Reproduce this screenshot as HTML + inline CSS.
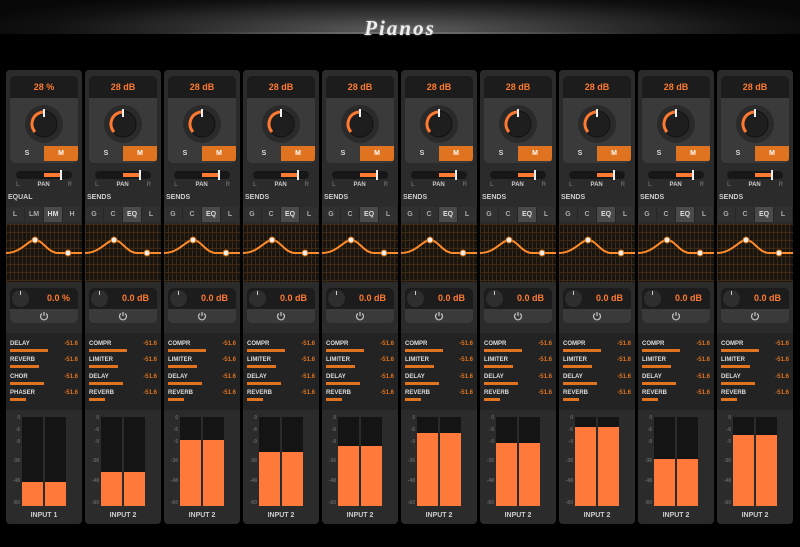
<!DOCTYPE html>
<html><head><style>
*{margin:0;padding:0;box-sizing:border-box}
body{width:800px;height:547px;background:#000;position:relative;overflow:hidden;font-family:"Liberation Sans",sans-serif;font-weight:bold}
.hdr{position:absolute;left:0;top:0;width:800px;height:34px;background:radial-gradient(ellipse 440px 40px at 400px 30px,#5c5c5c 0%,#303030 45%,#111 80%,#080808 100%)}
.hdr:after{content:"";position:absolute;left:150px;right:150px;bottom:0;height:2px;background:radial-gradient(ellipse at center,#888 0%,transparent 70%)}
.title{position:absolute;left:0;width:800px;top:16px;text-align:center;font-family:"Liberation Serif",serif;font-style:italic;font-size:21px;color:#eee;letter-spacing:2px;text-shadow:0 0 2px #999}
.s{position:absolute;top:70px;width:76px;height:454px;background:#2b2b2b;border-radius:4px;overflow:hidden}
.disp{position:absolute;left:4px;top:6px;width:68px;height:22px;background:#1c1c1c;border-radius:5px 5px 0 0;color:#ff7a30;font-size:9px;text-align:center;line-height:22px}
.kp{position:absolute;left:4px;top:28px;width:68px;height:65px;background:#3a3a3a;border-radius:0 0 5px 5px;overflow:hidden}
.kp svg{position:absolute;left:13px;top:5px}
.sm{position:absolute;left:0;top:48px;width:68px;height:15px;display:flex;font-size:7px;color:#ddd;line-height:15px;text-align:center}
.sm span{flex:1}.sm .m{background:#e0731f;color:#fff}
.pan{position:absolute;left:10px;top:101px;width:56px;height:8px;background:#171717;border-radius:4px}
.pan i{position:absolute;left:28px;top:2px;width:16px;height:4px;background:#ff7a30}
.pan b{position:absolute;left:44px;top:-1px;width:2px;height:10px;background:#eee}
.pl{position:absolute;top:112px;left:10px;width:56px;font-size:6px;color:#666;display:flex;justify-content:space-between}
.pl em{font-style:normal;color:#ccc}
.sec{position:absolute;left:2px;top:124px;font-size:7px;color:#ccc}
.tabs{position:absolute;left:0;top:137px;width:76px;height:15px;display:flex;font-size:7px;color:#aaa;line-height:15px;text-align:center;background:#303030}
.tabs span{flex:1;border-right:1px solid #262626}.tabs .a{background:#4a4a4a;color:#ddd}
.g{position:absolute;left:0;top:154px;width:76px;height:58px;background-color:#17130f;background-image:linear-gradient(90deg,#3e2a14 1px,transparent 1px),linear-gradient(#3e2a14 1px,transparent 1px);background-size:4px 8px}
.g svg{position:absolute;left:0;top:0}
.p2{position:absolute;left:4px;top:218px;width:68px;height:35px;background:#3a3a3a;border-radius:5px}
.p2 .d{position:absolute;left:0;top:0;width:68px;height:21px;background:#1c1c1c;border-radius:5px 5px 0 0;color:#ff7a30;font-size:9px;line-height:21px;text-align:right;padding-right:8px}
.p2 .k{position:absolute;left:2px;top:2px;width:17px;height:17px;border-radius:50%;background:#2e2e2e}
.p2 .k:after{content:"";position:absolute;left:8px;top:1px;width:1px;height:4px;background:#ccc}
.p2 svg{position:absolute;left:29px;top:23px}
.snd{position:absolute;left:0;top:263px;width:76px;height:77px;background:#232323}
.r{position:absolute;left:4px;width:68px;font-size:6px;color:#ddd}
.r span{position:absolute;right:0;color:#e0731f}
.r i{position:absolute;left:0;top:8px;height:3px;background:#e0731f}
.mt{position:absolute;left:0;top:344px;width:76px;height:96px}
.sc{position:absolute;left:2px;width:12px;text-align:right;font-size:5px;color:#666}
.ln{position:absolute;top:3px;width:21px;height:89px;background:#141414}
.ln i{position:absolute;left:0;bottom:0;width:21px;background:#ff7a3a}
.inp{position:absolute;left:0;top:442px;width:76px;text-align:center;font-size:7px;color:#ccc}
</style></head><body>
<div class="hdr"></div>
<div class="title">Pianos</div>

<div class="s" style="left:6px"><div class="disp">28 %</div><div class="kp"><svg width="42" height="42" viewBox="0 0 42 42"><circle cx="21" cy="21" r="19" fill="#2a2a2a"/><circle cx="21" cy="21" r="13" fill="#1e1e1e" stroke="#111"/><path d="M12 29 A12 12 0 0 1 21 9" fill="none" stroke="#ff7a30" stroke-width="3"/><rect x="20" y="6" width="2" height="8" fill="#eee"/></svg><div class="sm"><span>S</span><span class="m">M</span></div></div><div class="pan"><i></i><b></b></div><div class="pl"><span>L</span><em>PAN</em><span>R</span></div><div class="sec">EQUAL</div><div class="tabs"><span>L</span><span>LM</span><span class="a">HM</span><span>H</span></div><div class="g"><svg width="76" height="58"><path d="M0 29 C15 29 22 16 29 16 C37 16 42 29 52 29 L76 29" fill="none" stroke="#ff8a2a" stroke-width="2"/><circle cx="29" cy="16" r="3" fill="#eee" stroke="#c60"/><circle cx="62" cy="29" r="3" fill="#eee" stroke="#c60"/></svg></div><div class="p2"><div class="d">0.0 %</div><div class="k"></div><svg width="10" height="10" viewBox="0 0 10 10"><path d="M3 2.5A3.5 3.5 0 1 0 7 2.5M5 1V5" fill="none" stroke="#bbb" stroke-width="1.3"/></svg></div><div class="snd"><div class="r" style="top:8px">DELAY<span>-51.6</span><i style="width:38px"></i></div><div class="r" style="top:24px">REVERB<span>-51.6</span><i style="width:29px"></i></div><div class="r" style="top:41px">CHOR<span>-51.6</span><i style="width:34px"></i></div><div class="r" style="top:57px">PHASER<span>-51.6</span><i style="width:16px"></i></div></div><div class="mt"><div class="sc" style="top:1px">0</div><div class="sc" style="top:13px">-6</div><div class="sc" style="top:25px">-9</div><div class="sc" style="top:44px">-36</div><div class="sc" style="top:64px">-48</div><div class="sc" style="top:86px">-60</div><div class="ln" style="left:16px"><i style="height:24px"></i></div><div class="ln" style="left:39px"><i style="height:24px"></i></div></div><div class="inp">INPUT 1</div></div>

<div class="s" style="left:85px"><div class="disp">28 dB</div><div class="kp"><svg width="42" height="42" viewBox="0 0 42 42"><circle cx="21" cy="21" r="19" fill="#2a2a2a"/><circle cx="21" cy="21" r="13" fill="#1e1e1e" stroke="#111"/><path d="M12 29 A12 12 0 0 1 21 9" fill="none" stroke="#ff7a30" stroke-width="3"/><rect x="20" y="6" width="2" height="8" fill="#eee"/></svg><div class="sm"><span>S</span><span class="m">M</span></div></div><div class="pan"><i></i><b></b></div><div class="pl"><span>L</span><em>PAN</em><span>R</span></div><div class="sec">SENDS</div><div class="tabs"><span>G</span><span>C</span><span class="a">EQ</span><span>L</span></div><div class="g"><svg width="76" height="58"><path d="M0 29 C15 29 22 16 29 16 C37 16 42 29 52 29 L76 29" fill="none" stroke="#ff8a2a" stroke-width="2"/><circle cx="29" cy="16" r="3" fill="#eee" stroke="#c60"/><circle cx="62" cy="29" r="3" fill="#eee" stroke="#c60"/></svg></div><div class="p2"><div class="d">0.0 dB</div><div class="k"></div><svg width="10" height="10" viewBox="0 0 10 10"><path d="M3 2.5A3.5 3.5 0 1 0 7 2.5M5 1V5" fill="none" stroke="#bbb" stroke-width="1.3"/></svg></div><div class="snd"><div class="r" style="top:8px">COMPR<span>-51.6</span><i style="width:38px"></i></div><div class="r" style="top:24px">LIMITER<span>-51.6</span><i style="width:29px"></i></div><div class="r" style="top:41px">DELAY<span>-51.6</span><i style="width:34px"></i></div><div class="r" style="top:57px">REVERB<span>-51.6</span><i style="width:16px"></i></div></div><div class="mt"><div class="sc" style="top:1px">0</div><div class="sc" style="top:13px">-6</div><div class="sc" style="top:25px">-9</div><div class="sc" style="top:44px">-36</div><div class="sc" style="top:64px">-48</div><div class="sc" style="top:86px">-60</div><div class="ln" style="left:16px"><i style="height:34px"></i></div><div class="ln" style="left:39px"><i style="height:34px"></i></div></div><div class="inp">INPUT 2</div></div>

<div class="s" style="left:164px"><div class="disp">28 dB</div><div class="kp"><svg width="42" height="42" viewBox="0 0 42 42"><circle cx="21" cy="21" r="19" fill="#2a2a2a"/><circle cx="21" cy="21" r="13" fill="#1e1e1e" stroke="#111"/><path d="M12 29 A12 12 0 0 1 21 9" fill="none" stroke="#ff7a30" stroke-width="3"/><rect x="20" y="6" width="2" height="8" fill="#eee"/></svg><div class="sm"><span>S</span><span class="m">M</span></div></div><div class="pan"><i></i><b></b></div><div class="pl"><span>L</span><em>PAN</em><span>R</span></div><div class="sec">SENDS</div><div class="tabs"><span>G</span><span>C</span><span class="a">EQ</span><span>L</span></div><div class="g"><svg width="76" height="58"><path d="M0 29 C15 29 22 16 29 16 C37 16 42 29 52 29 L76 29" fill="none" stroke="#ff8a2a" stroke-width="2"/><circle cx="29" cy="16" r="3" fill="#eee" stroke="#c60"/><circle cx="62" cy="29" r="3" fill="#eee" stroke="#c60"/></svg></div><div class="p2"><div class="d">0.0 dB</div><div class="k"></div><svg width="10" height="10" viewBox="0 0 10 10"><path d="M3 2.5A3.5 3.5 0 1 0 7 2.5M5 1V5" fill="none" stroke="#bbb" stroke-width="1.3"/></svg></div><div class="snd"><div class="r" style="top:8px">COMPR<span>-51.6</span><i style="width:38px"></i></div><div class="r" style="top:24px">LIMITER<span>-51.6</span><i style="width:29px"></i></div><div class="r" style="top:41px">DELAY<span>-51.6</span><i style="width:34px"></i></div><div class="r" style="top:57px">REVERB<span>-51.6</span><i style="width:16px"></i></div></div><div class="mt"><div class="sc" style="top:1px">0</div><div class="sc" style="top:13px">-6</div><div class="sc" style="top:25px">-9</div><div class="sc" style="top:44px">-36</div><div class="sc" style="top:64px">-48</div><div class="sc" style="top:86px">-60</div><div class="ln" style="left:16px"><i style="height:66px"></i></div><div class="ln" style="left:39px"><i style="height:66px"></i></div></div><div class="inp">INPUT 2</div></div>

<div class="s" style="left:243px"><div class="disp">28 dB</div><div class="kp"><svg width="42" height="42" viewBox="0 0 42 42"><circle cx="21" cy="21" r="19" fill="#2a2a2a"/><circle cx="21" cy="21" r="13" fill="#1e1e1e" stroke="#111"/><path d="M12 29 A12 12 0 0 1 21 9" fill="none" stroke="#ff7a30" stroke-width="3"/><rect x="20" y="6" width="2" height="8" fill="#eee"/></svg><div class="sm"><span>S</span><span class="m">M</span></div></div><div class="pan"><i></i><b></b></div><div class="pl"><span>L</span><em>PAN</em><span>R</span></div><div class="sec">SENDS</div><div class="tabs"><span>G</span><span>C</span><span class="a">EQ</span><span>L</span></div><div class="g"><svg width="76" height="58"><path d="M0 29 C15 29 22 16 29 16 C37 16 42 29 52 29 L76 29" fill="none" stroke="#ff8a2a" stroke-width="2"/><circle cx="29" cy="16" r="3" fill="#eee" stroke="#c60"/><circle cx="62" cy="29" r="3" fill="#eee" stroke="#c60"/></svg></div><div class="p2"><div class="d">0.0 dB</div><div class="k"></div><svg width="10" height="10" viewBox="0 0 10 10"><path d="M3 2.5A3.5 3.5 0 1 0 7 2.5M5 1V5" fill="none" stroke="#bbb" stroke-width="1.3"/></svg></div><div class="snd"><div class="r" style="top:8px">COMPR<span>-51.6</span><i style="width:38px"></i></div><div class="r" style="top:24px">LIMITER<span>-51.6</span><i style="width:29px"></i></div><div class="r" style="top:41px">DELAY<span>-51.6</span><i style="width:34px"></i></div><div class="r" style="top:57px">REVERB<span>-51.6</span><i style="width:16px"></i></div></div><div class="mt"><div class="sc" style="top:1px">0</div><div class="sc" style="top:13px">-6</div><div class="sc" style="top:25px">-9</div><div class="sc" style="top:44px">-36</div><div class="sc" style="top:64px">-48</div><div class="sc" style="top:86px">-60</div><div class="ln" style="left:16px"><i style="height:54px"></i></div><div class="ln" style="left:39px"><i style="height:54px"></i></div></div><div class="inp">INPUT 2</div></div>

<div class="s" style="left:322px"><div class="disp">28 dB</div><div class="kp"><svg width="42" height="42" viewBox="0 0 42 42"><circle cx="21" cy="21" r="19" fill="#2a2a2a"/><circle cx="21" cy="21" r="13" fill="#1e1e1e" stroke="#111"/><path d="M12 29 A12 12 0 0 1 21 9" fill="none" stroke="#ff7a30" stroke-width="3"/><rect x="20" y="6" width="2" height="8" fill="#eee"/></svg><div class="sm"><span>S</span><span class="m">M</span></div></div><div class="pan"><i></i><b></b></div><div class="pl"><span>L</span><em>PAN</em><span>R</span></div><div class="sec">SENDS</div><div class="tabs"><span>G</span><span>C</span><span class="a">EQ</span><span>L</span></div><div class="g"><svg width="76" height="58"><path d="M0 29 C15 29 22 16 29 16 C37 16 42 29 52 29 L76 29" fill="none" stroke="#ff8a2a" stroke-width="2"/><circle cx="29" cy="16" r="3" fill="#eee" stroke="#c60"/><circle cx="62" cy="29" r="3" fill="#eee" stroke="#c60"/></svg></div><div class="p2"><div class="d">0.0 dB</div><div class="k"></div><svg width="10" height="10" viewBox="0 0 10 10"><path d="M3 2.5A3.5 3.5 0 1 0 7 2.5M5 1V5" fill="none" stroke="#bbb" stroke-width="1.3"/></svg></div><div class="snd"><div class="r" style="top:8px">COMPR<span>-51.6</span><i style="width:38px"></i></div><div class="r" style="top:24px">LIMITER<span>-51.6</span><i style="width:29px"></i></div><div class="r" style="top:41px">DELAY<span>-51.6</span><i style="width:34px"></i></div><div class="r" style="top:57px">REVERB<span>-51.6</span><i style="width:16px"></i></div></div><div class="mt"><div class="sc" style="top:1px">0</div><div class="sc" style="top:13px">-6</div><div class="sc" style="top:25px">-9</div><div class="sc" style="top:44px">-36</div><div class="sc" style="top:64px">-48</div><div class="sc" style="top:86px">-60</div><div class="ln" style="left:16px"><i style="height:60px"></i></div><div class="ln" style="left:39px"><i style="height:60px"></i></div></div><div class="inp">INPUT 2</div></div>

<div class="s" style="left:401px"><div class="disp">28 dB</div><div class="kp"><svg width="42" height="42" viewBox="0 0 42 42"><circle cx="21" cy="21" r="19" fill="#2a2a2a"/><circle cx="21" cy="21" r="13" fill="#1e1e1e" stroke="#111"/><path d="M12 29 A12 12 0 0 1 21 9" fill="none" stroke="#ff7a30" stroke-width="3"/><rect x="20" y="6" width="2" height="8" fill="#eee"/></svg><div class="sm"><span>S</span><span class="m">M</span></div></div><div class="pan"><i></i><b></b></div><div class="pl"><span>L</span><em>PAN</em><span>R</span></div><div class="sec">SENDS</div><div class="tabs"><span>G</span><span>C</span><span class="a">EQ</span><span>L</span></div><div class="g"><svg width="76" height="58"><path d="M0 29 C15 29 22 16 29 16 C37 16 42 29 52 29 L76 29" fill="none" stroke="#ff8a2a" stroke-width="2"/><circle cx="29" cy="16" r="3" fill="#eee" stroke="#c60"/><circle cx="62" cy="29" r="3" fill="#eee" stroke="#c60"/></svg></div><div class="p2"><div class="d">0.0 dB</div><div class="k"></div><svg width="10" height="10" viewBox="0 0 10 10"><path d="M3 2.5A3.5 3.5 0 1 0 7 2.5M5 1V5" fill="none" stroke="#bbb" stroke-width="1.3"/></svg></div><div class="snd"><div class="r" style="top:8px">COMPR<span>-51.6</span><i style="width:38px"></i></div><div class="r" style="top:24px">LIMITER<span>-51.6</span><i style="width:29px"></i></div><div class="r" style="top:41px">DELAY<span>-51.6</span><i style="width:34px"></i></div><div class="r" style="top:57px">REVERB<span>-51.6</span><i style="width:16px"></i></div></div><div class="mt"><div class="sc" style="top:1px">0</div><div class="sc" style="top:13px">-6</div><div class="sc" style="top:25px">-9</div><div class="sc" style="top:44px">-36</div><div class="sc" style="top:64px">-48</div><div class="sc" style="top:86px">-60</div><div class="ln" style="left:16px"><i style="height:73px"></i></div><div class="ln" style="left:39px"><i style="height:73px"></i></div></div><div class="inp">INPUT 2</div></div>

<div class="s" style="left:480px"><div class="disp">28 dB</div><div class="kp"><svg width="42" height="42" viewBox="0 0 42 42"><circle cx="21" cy="21" r="19" fill="#2a2a2a"/><circle cx="21" cy="21" r="13" fill="#1e1e1e" stroke="#111"/><path d="M12 29 A12 12 0 0 1 21 9" fill="none" stroke="#ff7a30" stroke-width="3"/><rect x="20" y="6" width="2" height="8" fill="#eee"/></svg><div class="sm"><span>S</span><span class="m">M</span></div></div><div class="pan"><i></i><b></b></div><div class="pl"><span>L</span><em>PAN</em><span>R</span></div><div class="sec">SENDS</div><div class="tabs"><span>G</span><span>C</span><span class="a">EQ</span><span>L</span></div><div class="g"><svg width="76" height="58"><path d="M0 29 C15 29 22 16 29 16 C37 16 42 29 52 29 L76 29" fill="none" stroke="#ff8a2a" stroke-width="2"/><circle cx="29" cy="16" r="3" fill="#eee" stroke="#c60"/><circle cx="62" cy="29" r="3" fill="#eee" stroke="#c60"/></svg></div><div class="p2"><div class="d">0.0 dB</div><div class="k"></div><svg width="10" height="10" viewBox="0 0 10 10"><path d="M3 2.5A3.5 3.5 0 1 0 7 2.5M5 1V5" fill="none" stroke="#bbb" stroke-width="1.3"/></svg></div><div class="snd"><div class="r" style="top:8px">COMPR<span>-51.6</span><i style="width:38px"></i></div><div class="r" style="top:24px">LIMITER<span>-51.6</span><i style="width:29px"></i></div><div class="r" style="top:41px">DELAY<span>-51.6</span><i style="width:34px"></i></div><div class="r" style="top:57px">REVERB<span>-51.6</span><i style="width:16px"></i></div></div><div class="mt"><div class="sc" style="top:1px">0</div><div class="sc" style="top:13px">-6</div><div class="sc" style="top:25px">-9</div><div class="sc" style="top:44px">-36</div><div class="sc" style="top:64px">-48</div><div class="sc" style="top:86px">-60</div><div class="ln" style="left:16px"><i style="height:63px"></i></div><div class="ln" style="left:39px"><i style="height:63px"></i></div></div><div class="inp">INPUT 2</div></div>

<div class="s" style="left:559px"><div class="disp">28 dB</div><div class="kp"><svg width="42" height="42" viewBox="0 0 42 42"><circle cx="21" cy="21" r="19" fill="#2a2a2a"/><circle cx="21" cy="21" r="13" fill="#1e1e1e" stroke="#111"/><path d="M12 29 A12 12 0 0 1 21 9" fill="none" stroke="#ff7a30" stroke-width="3"/><rect x="20" y="6" width="2" height="8" fill="#eee"/></svg><div class="sm"><span>S</span><span class="m">M</span></div></div><div class="pan"><i></i><b></b></div><div class="pl"><span>L</span><em>PAN</em><span>R</span></div><div class="sec">SENDS</div><div class="tabs"><span>G</span><span>C</span><span class="a">EQ</span><span>L</span></div><div class="g"><svg width="76" height="58"><path d="M0 29 C15 29 22 16 29 16 C37 16 42 29 52 29 L76 29" fill="none" stroke="#ff8a2a" stroke-width="2"/><circle cx="29" cy="16" r="3" fill="#eee" stroke="#c60"/><circle cx="62" cy="29" r="3" fill="#eee" stroke="#c60"/></svg></div><div class="p2"><div class="d">0.0 dB</div><div class="k"></div><svg width="10" height="10" viewBox="0 0 10 10"><path d="M3 2.5A3.5 3.5 0 1 0 7 2.5M5 1V5" fill="none" stroke="#bbb" stroke-width="1.3"/></svg></div><div class="snd"><div class="r" style="top:8px">COMPR<span>-51.6</span><i style="width:38px"></i></div><div class="r" style="top:24px">LIMITER<span>-51.6</span><i style="width:29px"></i></div><div class="r" style="top:41px">DELAY<span>-51.6</span><i style="width:34px"></i></div><div class="r" style="top:57px">REVERB<span>-51.6</span><i style="width:16px"></i></div></div><div class="mt"><div class="sc" style="top:1px">0</div><div class="sc" style="top:13px">-6</div><div class="sc" style="top:25px">-9</div><div class="sc" style="top:44px">-36</div><div class="sc" style="top:64px">-48</div><div class="sc" style="top:86px">-60</div><div class="ln" style="left:16px"><i style="height:79px"></i></div><div class="ln" style="left:39px"><i style="height:79px"></i></div></div><div class="inp">INPUT 2</div></div>

<div class="s" style="left:638px"><div class="disp">28 dB</div><div class="kp"><svg width="42" height="42" viewBox="0 0 42 42"><circle cx="21" cy="21" r="19" fill="#2a2a2a"/><circle cx="21" cy="21" r="13" fill="#1e1e1e" stroke="#111"/><path d="M12 29 A12 12 0 0 1 21 9" fill="none" stroke="#ff7a30" stroke-width="3"/><rect x="20" y="6" width="2" height="8" fill="#eee"/></svg><div class="sm"><span>S</span><span class="m">M</span></div></div><div class="pan"><i></i><b></b></div><div class="pl"><span>L</span><em>PAN</em><span>R</span></div><div class="sec">SENDS</div><div class="tabs"><span>G</span><span>C</span><span class="a">EQ</span><span>L</span></div><div class="g"><svg width="76" height="58"><path d="M0 29 C15 29 22 16 29 16 C37 16 42 29 52 29 L76 29" fill="none" stroke="#ff8a2a" stroke-width="2"/><circle cx="29" cy="16" r="3" fill="#eee" stroke="#c60"/><circle cx="62" cy="29" r="3" fill="#eee" stroke="#c60"/></svg></div><div class="p2"><div class="d">0.0 dB</div><div class="k"></div><svg width="10" height="10" viewBox="0 0 10 10"><path d="M3 2.5A3.5 3.5 0 1 0 7 2.5M5 1V5" fill="none" stroke="#bbb" stroke-width="1.3"/></svg></div><div class="snd"><div class="r" style="top:8px">COMPR<span>-51.6</span><i style="width:38px"></i></div><div class="r" style="top:24px">LIMITER<span>-51.6</span><i style="width:29px"></i></div><div class="r" style="top:41px">DELAY<span>-51.6</span><i style="width:34px"></i></div><div class="r" style="top:57px">REVERB<span>-51.6</span><i style="width:16px"></i></div></div><div class="mt"><div class="sc" style="top:1px">0</div><div class="sc" style="top:13px">-6</div><div class="sc" style="top:25px">-9</div><div class="sc" style="top:44px">-36</div><div class="sc" style="top:64px">-48</div><div class="sc" style="top:86px">-60</div><div class="ln" style="left:16px"><i style="height:47px"></i></div><div class="ln" style="left:39px"><i style="height:47px"></i></div></div><div class="inp">INPUT 2</div></div>

<div class="s" style="left:717px"><div class="disp">28 dB</div><div class="kp"><svg width="42" height="42" viewBox="0 0 42 42"><circle cx="21" cy="21" r="19" fill="#2a2a2a"/><circle cx="21" cy="21" r="13" fill="#1e1e1e" stroke="#111"/><path d="M12 29 A12 12 0 0 1 21 9" fill="none" stroke="#ff7a30" stroke-width="3"/><rect x="20" y="6" width="2" height="8" fill="#eee"/></svg><div class="sm"><span>S</span><span class="m">M</span></div></div><div class="pan"><i></i><b></b></div><div class="pl"><span>L</span><em>PAN</em><span>R</span></div><div class="sec">SENDS</div><div class="tabs"><span>G</span><span>C</span><span class="a">EQ</span><span>L</span></div><div class="g"><svg width="76" height="58"><path d="M0 29 C15 29 22 16 29 16 C37 16 42 29 52 29 L76 29" fill="none" stroke="#ff8a2a" stroke-width="2"/><circle cx="29" cy="16" r="3" fill="#eee" stroke="#c60"/><circle cx="62" cy="29" r="3" fill="#eee" stroke="#c60"/></svg></div><div class="p2"><div class="d">0.0 dB</div><div class="k"></div><svg width="10" height="10" viewBox="0 0 10 10"><path d="M3 2.5A3.5 3.5 0 1 0 7 2.5M5 1V5" fill="none" stroke="#bbb" stroke-width="1.3"/></svg></div><div class="snd"><div class="r" style="top:8px">COMPR<span>-51.6</span><i style="width:38px"></i></div><div class="r" style="top:24px">LIMITER<span>-51.6</span><i style="width:29px"></i></div><div class="r" style="top:41px">DELAY<span>-51.6</span><i style="width:34px"></i></div><div class="r" style="top:57px">REVERB<span>-51.6</span><i style="width:16px"></i></div></div><div class="mt"><div class="sc" style="top:1px">0</div><div class="sc" style="top:13px">-6</div><div class="sc" style="top:25px">-9</div><div class="sc" style="top:44px">-36</div><div class="sc" style="top:64px">-48</div><div class="sc" style="top:86px">-60</div><div class="ln" style="left:16px"><i style="height:71px"></i></div><div class="ln" style="left:39px"><i style="height:71px"></i></div></div><div class="inp">INPUT 2</div></div>

</body></html>
